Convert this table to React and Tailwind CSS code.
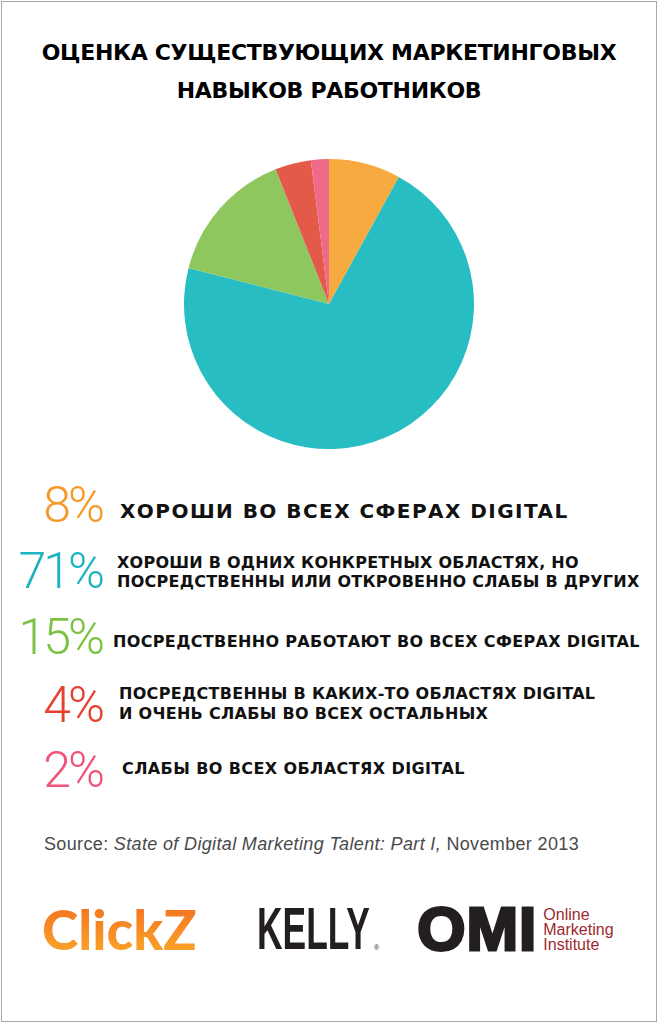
import React from "react";

const slices = [
  { v: 0.08, c: "#F7AA3F" },
  { v: 0.71, c: "#27BDC3" },
  { v: 0.15, c: "#8FC75F" },
  { v: 0.04, c: "#E45A49" },
  { v: 0.02, c: "#EF6A89" },
];

function Pie() {
  const r = 145;
  const cx = 145;
  const cy = 145;
  let acc = 0;
  const pt = (f) => {
    const a = 2 * Math.PI * f;
    return [cx + r * Math.sin(a), cy - r * Math.cos(a)];
  };
  return (
    <svg width="290" height="290" viewBox="0 0 290 290">
      {slices.map((s, i) => {
        const [x1, y1] = pt(acc);
        acc += s.v;
        const [x2, y2] = pt(acc);
        const large = s.v > 0.5 ? 1 : 0;
        return (
          <path
            key={i}
            d={`M${cx} ${cy} L${x1} ${y1} A${r} ${r} 0 ${large} 1 ${x2} ${y2} Z`}
            fill={s.c}
          />
        );
      })}
    </svg>
  );
}

const pctCls =
  "w-[102px] shrink-0 text-right font-['Roboto',sans-serif] font-light text-[50px] leading-[50px] tracking-[-3px] pr-[2px]";
const txtCls =
  "font-['DejaVu_Sans',sans-serif] font-bold uppercase text-[#111] whitespace-nowrap";

export default function App() {
  return (
    <div className="w-[659px] h-[1024px] bg-white pl-px pt-px">
      <div className="w-[656px] h-[1021px] border border-[#a8a8a8] flex flex-col">
        <h1 className="pt-[32px] text-center font-['DejaVu_Sans',sans-serif] font-bold text-[22px] leading-[38px] tracking-[-0.3px] text-black">
          ОЦЕНКА СУЩЕСТВУЮЩИХ МАРКЕТИНГОВЫХ
          <br />
          НАВЫКОВ РАБОТНИКОВ
        </h1>

        <div className="mt-[49px] flex justify-center">
          <Pie />
        </div>

        <div className="mt-[31px] flex flex-col">
          <div className="flex items-start h-[50px]">
            <div className={`${pctCls} text-[#F59A2A]`}>8%</div>
            <div className={`${txtCls} ml-[16px] mt-[19px] text-[20px] leading-[24px] tracking-[1.45px]`}>
              Хороши во всех сферах digital
            </div>
          </div>
          <div className="mt-[16px] flex items-start h-[50px]">
            <div className={`${pctCls} text-[#1BB4C0]`}>71%</div>
            <div className={`${txtCls} ml-[13px] mt-[7px] text-[16px] leading-[19px] tracking-[0.25px]`}>
              Хороши в одних конкретных областях, но
              <br />
              посредственны или откровенно слабы в других
            </div>
          </div>
          <div className="mt-[16px] flex items-start h-[50px]">
            <div className={`${pctCls} text-[#7CC242]`}>15%</div>
            <div className={`${txtCls} ml-[9px] mt-[20px] text-[16px] leading-[20px] tracking-[0.35px]`}>
              Посредственно работают во всех сферах digital
            </div>
          </div>
          <div className="mt-[18px] flex items-start h-[50px]">
            <div className={`${pctCls} text-[#E4412F]`}>4%</div>
            <div className={`${txtCls} ml-[15px] mt-[4px] text-[16px] leading-[20px] tracking-[0.3px]`}>
              Посредственны в каких-то областях digital
              <br />
              и очень слабы во всех остальных
            </div>
          </div>
          <div className="mt-[15px] flex items-start h-[50px]">
            <div className={`${pctCls} text-[#EE5577]`}>2%</div>
            <div className={`${txtCls} ml-[18px] mt-[14px] text-[16px] leading-[20px] tracking-[0.4px]`}>
              Слабы во всех областях digital
            </div>
          </div>
        </div>

        <p className="mt-[39px] ml-[42px] font-['Liberation_Sans',sans-serif] text-[18px] leading-[20px] tracking-[0.35px] text-[#4a4a4a] whitespace-nowrap">
          Source: <i>State of Digital Marketing Talent: Part I,</i> November 2013
        </p>

        <div className="mt-[50px] h-[50px] flex items-center">
          <div className="ml-[40px] w-[160px] font-['Lato',sans-serif] font-black text-[55px] leading-[54px] bg-linear-to-b from-[#F36F21] to-[#F9A62A] bg-clip-text text-transparent">
            ClickZ
          </div>
          <div className="ml-[55px] flex items-end">
            <div className="w-[117px] overflow-visible">
              <span className="inline-block origin-left scale-x-[0.59] font-['Liberation_Sans',sans-serif] font-bold text-[60px] leading-[50px] text-[#231F20] whitespace-nowrap">
                KELLY
              </span>
            </div>
            <span className="mb-[4px] font-['Liberation_Sans',sans-serif] text-[7px] leading-[7px] text-[#231F20]">
              ®
            </span>
          </div>
          <div className="ml-[38px] flex items-center">
            <span className="font-['Liberation_Sans',sans-serif] font-bold text-[62px] leading-[50px] text-[#231F20] [-webkit-text-stroke:3px_#231F20] tracking-[1px]">
              OMI
            </span>
            <div className="ml-[6px] font-['Liberation_Sans',sans-serif] text-[16px] leading-[15px] text-[#9E2A2F]">
              Online
              <br />
              Marketing
              <br />
              Institute
            </div>
          </div>
        </div>
      </div>
    </div>
  );
}
